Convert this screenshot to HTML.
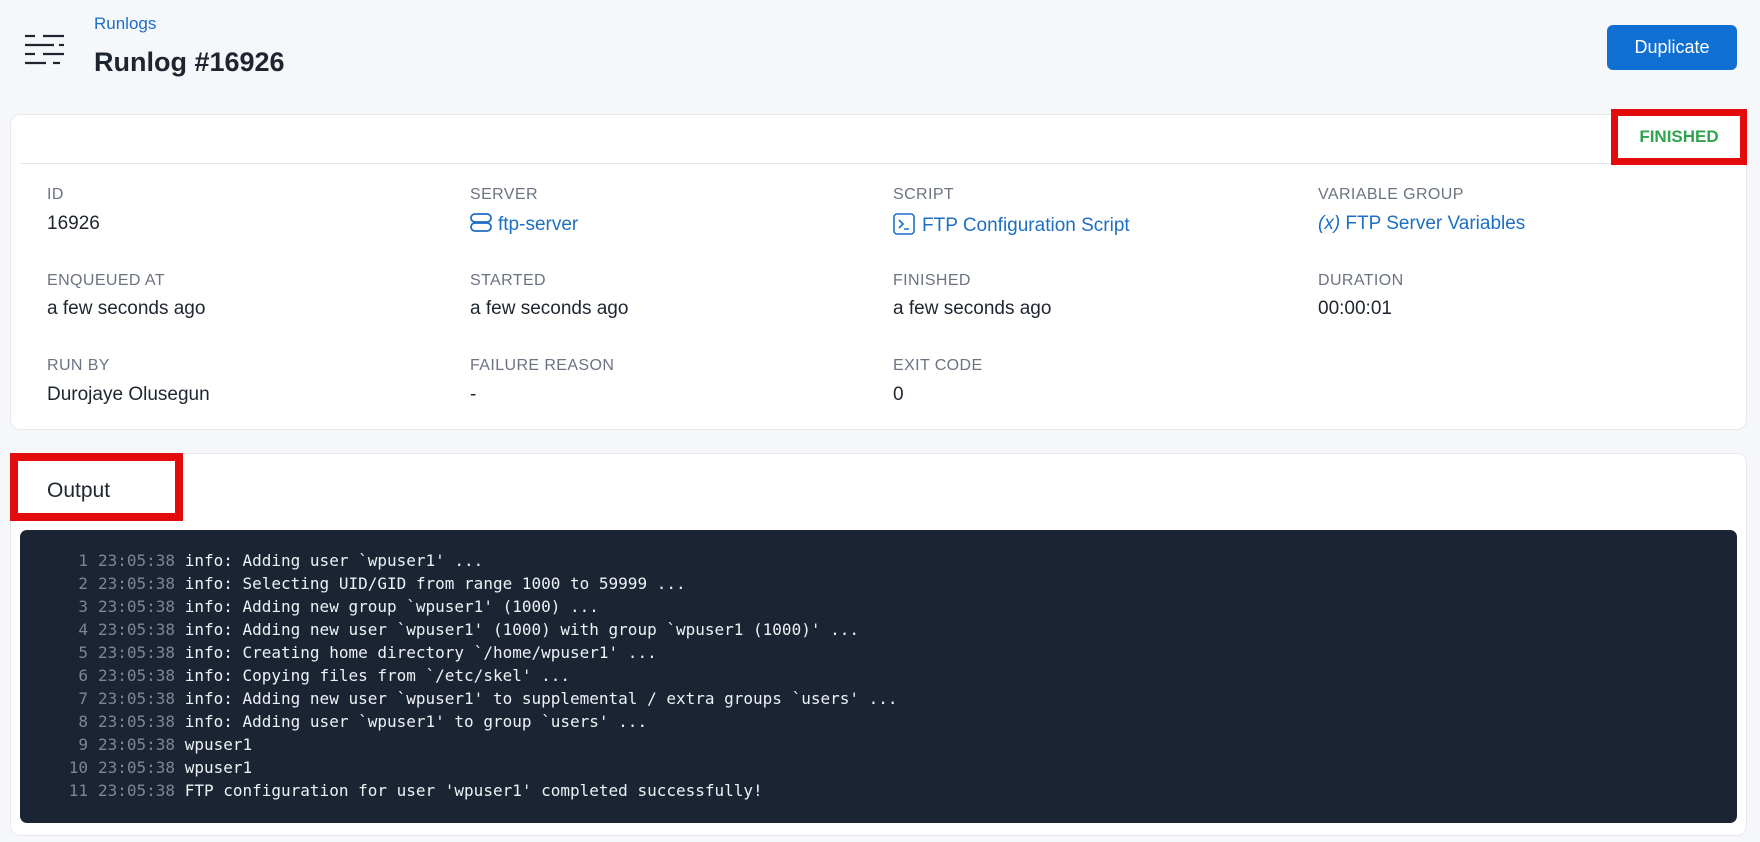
<!DOCTYPE html>
<html><head><meta charset="utf-8"><style>
*{box-sizing:border-box;margin:0;padding:0}
body{width:1760px;height:842px;background:#f5f7fa;font-family:"Liberation Sans",sans-serif;color:#1f2530;position:relative;overflow:hidden}
.abs{position:absolute}
.card{position:absolute;background:#fff;border:1px solid #e6e8ec;border-radius:10px}
.lbl{position:absolute;font-size:16px;color:#6b7383;letter-spacing:.4px;text-transform:uppercase}
.val{position:absolute;font-size:19px;color:#1f2530}
.link{color:#1d6fc4}
.term{position:absolute;left:20px;top:530px;width:1717px;height:293px;background:#1a2433;border-radius:7px;font-family:"DejaVu Sans Mono","Liberation Mono",monospace;font-size:16px;color:#eef1f5}
.ln{position:absolute;left:0;height:23px;line-height:23px;white-space:pre}
.n{display:inline-block;width:68px;text-align:right;color:#7c8696}
.t{color:#7c8696;margin-left:10px}
</style></head><body>
<svg class="abs" style="left:24px;top:34px" width="42" height="32" viewBox="0 0 42 32" stroke="#1f2530" stroke-width="2.2">
<line x1="1" y1="2" x2="11" y2="2"/><line x1="19" y1="2" x2="40" y2="2"/>
<line x1="1" y1="11" x2="30" y2="11"/><line x1="35" y1="11" x2="40" y2="11"/>
<line x1="1" y1="20" x2="11" y2="20"/><line x1="19" y1="20" x2="40" y2="20"/>
<line x1="1" y1="29" x2="22" y2="29"/><line x1="29" y1="29" x2="36" y2="29"/>
</svg>
<div class="abs link" style="left:94px;top:14px;font-size:17px">Runlogs</div>
<div class="abs" style="left:94px;top:47px;font-size:27px;font-weight:bold">Runlog #16926</div>
<div class="abs" style="left:1607px;top:25px;width:130px;height:45px;background:#0f6fd2;border-radius:6px;color:#fff;font-size:18px;line-height:45px;text-align:center">Duplicate</div>

<div class="card" style="left:10px;top:114px;width:1737px;height:316px"></div>
<div class="abs" style="left:20px;top:163px;width:1727px;height:1px;background:#e3e6ea"></div>
<div class="abs" style="left:1611px;top:109px;width:136px;height:56px;border:7px solid #e30b0b;background:#fff;color:#2ea44f;font-size:17px;font-weight:bold;text-align:center;line-height:42px">FINISHED</div>

<div class="lbl" style="left:47px;top:186px">ID</div>
<div class="val" style="left:47px;top:213px">16926</div>
<div class="lbl" style="left:470px;top:186px">Server</div>
<div class="val link" style="left:470px;top:213px"><svg width="22" height="20" viewBox="0 0 22 20" style="vertical-align:-3px;margin-right:6px" fill="none" stroke="#1d6fc4" stroke-width="1.8"><rect x="1" y="1" width="20" height="8" rx="4"/><rect x="1" y="10" width="20" height="8" rx="4"/></svg>ftp-server</div>
<div class="lbl" style="left:893px;top:186px">Script</div>
<div class="val link" style="left:893px;top:213px"><svg width="22" height="22" viewBox="0 0 22 22" style="vertical-align:-4px;margin-right:7px" fill="none" stroke="#1d6fc4" stroke-width="1.6"><rect x="1" y="1" width="20" height="20" rx="3"/><path d="M6 7l4 4-4 4M11 16h5"/></svg>FTP Configuration Script</div>
<div class="lbl" style="left:1318px;top:186px">Variable Group</div>
<div class="val link" style="left:1318px;top:213px"><i>(x)</i> FTP Server Variables</div>

<div class="lbl" style="left:47px;top:272px">Enqueued at</div>
<div class="val" style="left:47px;top:298px">a few seconds ago</div>
<div class="lbl" style="left:470px;top:272px">Started</div>
<div class="val" style="left:470px;top:298px">a few seconds ago</div>
<div class="lbl" style="left:893px;top:272px">Finished</div>
<div class="val" style="left:893px;top:298px">a few seconds ago</div>
<div class="lbl" style="left:1318px;top:272px">Duration</div>
<div class="val" style="left:1318px;top:298px">00:00:01</div>

<div class="lbl" style="left:47px;top:357px">Run by</div>
<div class="val" style="left:47px;top:384px">Durojaye Olusegun</div>
<div class="lbl" style="left:470px;top:357px">Failure reason</div>
<div class="val" style="left:470px;top:384px">-</div>
<div class="lbl" style="left:893px;top:357px">Exit code</div>
<div class="val" style="left:893px;top:384px">0</div>

<div class="card" style="left:10px;top:453px;width:1737px;height:383px"></div>
<div class="abs" style="left:10px;top:453px;width:173px;height:68px;border:8px solid #e30b0b;background:#fff"></div>
<div class="abs" style="left:47px;top:479px;font-size:21px">Output</div>

<div class="term">
<div class="ln" style="top:19px"><span class="n">1</span><span class="t">23:05:38</span> info: Adding user `wpuser1' ...</div>
<div class="ln" style="top:42px"><span class="n">2</span><span class="t">23:05:38</span> info: Selecting UID/GID from range 1000 to 59999 ...</div>
<div class="ln" style="top:65px"><span class="n">3</span><span class="t">23:05:38</span> info: Adding new group `wpuser1' (1000) ...</div>
<div class="ln" style="top:88px"><span class="n">4</span><span class="t">23:05:38</span> info: Adding new user `wpuser1' (1000) with group `wpuser1 (1000)' ...</div>
<div class="ln" style="top:111px"><span class="n">5</span><span class="t">23:05:38</span> info: Creating home directory `/home/wpuser1' ...</div>
<div class="ln" style="top:134px"><span class="n">6</span><span class="t">23:05:38</span> info: Copying files from `/etc/skel' ...</div>
<div class="ln" style="top:157px"><span class="n">7</span><span class="t">23:05:38</span> info: Adding new user `wpuser1' to supplemental / extra groups `users' ...</div>
<div class="ln" style="top:180px"><span class="n">8</span><span class="t">23:05:38</span> info: Adding user `wpuser1' to group `users' ...</div>
<div class="ln" style="top:203px"><span class="n">9</span><span class="t">23:05:38</span> wpuser1</div>
<div class="ln" style="top:226px"><span class="n">10</span><span class="t">23:05:38</span> wpuser1</div>
<div class="ln" style="top:249px"><span class="n">11</span><span class="t">23:05:38</span> FTP configuration for user 'wpuser1' completed successfully!</div>
</div>
</body></html>
